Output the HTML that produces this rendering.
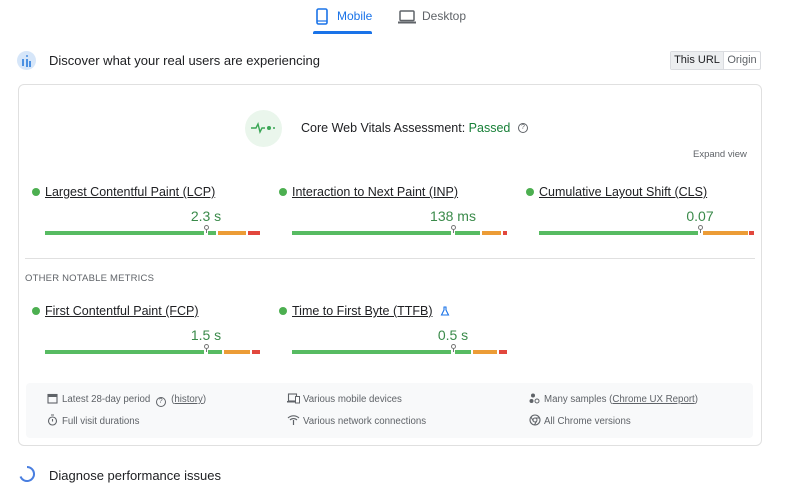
<!DOCTYPE html>
<html><head><meta charset="utf-8"><style>
*{margin:0;padding:0;box-sizing:border-box}
body{width:800px;height:493px;background:#fff;font-family:"Liberation Sans",sans-serif;color:#202124;position:relative;overflow:hidden}
.a{position:absolute;white-space:nowrap}
.lbl{font-size:12.5px;text-decoration:underline;color:#202124}
.dot{width:8px;height:8px;border-radius:50%;background:#4caf50}
.val{font-size:14px;color:#3a8a4a;transform:translateX(-50%)}
.seg{position:absolute;height:4px;top:231px}
.g{background:#57bb62}.o{background:#ec9c36}.r{background:#e2473d}
.mk{position:absolute;width:5px;height:5px;border:1px solid #777;border-radius:50%;background:#fff}
.mkl{position:absolute;width:1px;height:4px;background:#777}
.ft{font-size:9.7px;color:#5f6368}
</style></head><body>
<svg class="a" style="left:316px;top:8px" width="12" height="17" viewBox="0 0 12 17"><rect x="1" y="1" width="10" height="15" rx="1.5" fill="none" stroke="#1a73e8" stroke-width="1.6"/><line x1="1" y1="13" x2="11" y2="13" stroke="#1a73e8" stroke-width="1.2"/></svg>
<div class="a" style="left:337px;top:9px;font-size:12px;color:#1a73e8">Mobile</div>
<div class="a" style="left:313px;top:31px;width:59px;height:3px;background:#1a73e8;border-radius:2px 2px 0 0"></div>
<svg class="a" style="left:398px;top:10px" width="18" height="14" viewBox="0 0 18 14"><rect x="2" y="1" width="14" height="9.5" rx="1" fill="none" stroke="#5f6368" stroke-width="1.5"/><rect x="0" y="11.5" width="18" height="2" fill="#5f6368"/></svg>
<div class="a" style="left:422px;top:9px;font-size:12px;color:#5f6368">Desktop</div>
<div class="a" style="left:17px;top:51px;width:19px;height:19px;border-radius:50%;background:#d6e6f9"></div>
<div class="a" style="left:22px;top:59px;width:2px;height:7px;background:#4a90e2"></div>
<div class="a" style="left:25.5px;top:55px;width:2px;height:2px;background:#4a90e2;border-radius:50%"></div>
<div class="a" style="left:25.5px;top:59px;width:2px;height:8px;background:#4a90e2"></div>
<div class="a" style="left:29px;top:61px;width:2px;height:6px;background:#4a90e2"></div>
<div class="a" style="left:49px;top:53px;font-size:13px">Discover what your real users are experiencing</div>
<div class="a" style="left:670px;top:51px;width:91px;height:19px;border:1px solid #dadce0;border-radius:2px;font-size:11px"></div>
<div class="a" style="left:671px;top:52px;width:53px;height:17px;background:#eceef0;border-right:1px solid #dadce0;font-size:11px;text-align:center;line-height:17px">This URL</div>
<div class="a" style="left:724px;top:52px;width:36px;height:17px;font-size:11px;color:#5f6368;text-align:center;line-height:17px">Origin</div>
<div class="a" style="left:18px;top:84px;width:744px;height:362px;border:1px solid #e0e0e0;border-radius:6px"></div>
<div class="a" style="left:245px;top:110px;width:37px;height:37px;border-radius:50%;background:#eaf6ec"></div>
<svg class="a" style="left:250px;top:121px" width="26" height="14" viewBox="0 0 26 14"><path d="M1 7h5l2-4 2 8 2-4h3" fill="none" stroke="#3aa655" stroke-width="1.4"/><circle cx="19" cy="7" r="2" fill="#3aa655"/><circle cx="24" cy="7" r="1" fill="#3aa655"/></svg>
<div class="a" style="left:301px;top:121px;font-size:12.5px">Core Web Vitals Assessment: <span style="color:#188038">Passed</span></div>
<div class="a" style="left:518px;top:123px;width:10px;height:10px;border:1px solid #5f6368;border-radius:50%;font-size:7px;text-align:center;line-height:8px;color:#5f6368">?</div>
<div class="a" style="left:693px;top:149px;font-size:9.5px;color:#5f6368">Expand view</div>

<div class="a dot" style="left:32px;top:188px"></div><div class="a lbl" style="left:45px;top:185px">Largest Contentful Paint (LCP)</div>
<div class="a dot" style="left:279px;top:188px"></div><div class="a lbl" style="left:292px;top:185px">Interaction to Next Paint (INP)</div>
<div class="a dot" style="left:526px;top:188px"></div><div class="a lbl" style="left:539px;top:185px">Cumulative Layout Shift (CLS)</div>
<div class="a val" style="left:206px;top:208px">2.3 s</div>
<div class="a val" style="left:453px;top:208px">138 ms</div>
<div class="a val" style="left:700px;top:208px">0.07</div>

<div class="seg g" style="left:45px;width:159px"></div><div class="seg g" style="left:208px;width:8px"></div><div class="seg o" style="left:218px;width:28px"></div><div class="seg r" style="left:248px;width:12px"></div>
<div class="mk" style="left:203.5px;top:225px"></div><div class="mkl" style="left:206px;top:229px"></div>
<div class="seg g" style="left:292px;width:159px"></div><div class="seg g" style="left:455px;width:25px"></div><div class="seg o" style="left:482px;width:19px"></div><div class="seg r" style="left:503px;width:4px"></div>
<div class="mk" style="left:450.5px;top:225px"></div><div class="mkl" style="left:453px;top:229px"></div>
<div class="seg g" style="left:539px;width:159px"></div><div class="seg o" style="left:703px;width:45px"></div><div class="seg r" style="left:749px;width:5px"></div>
<div class="mk" style="left:697.5px;top:225px"></div><div class="mkl" style="left:700px;top:229px"></div>

<div class="a" style="left:25px;top:258px;width:730px;height:1px;background:#e0e0e0"></div>
<div class="a" style="left:25px;top:273px;font-size:9.5px;color:#5f6368;letter-spacing:.2px">OTHER NOTABLE METRICS</div>

<div class="a dot" style="left:32px;top:307px"></div><div class="a lbl" style="left:45px;top:304px">First Contentful Paint (FCP)</div>
<div class="a dot" style="left:279px;top:307px"></div><div class="a lbl" style="left:292px;top:304px">Time to First Byte (TTFB)</div>
<svg class="a" style="left:440px;top:306px" width="10" height="10" viewBox="0 0 10 10"><path d="M3.5 1h3M4 1v3L1.5 9h7L6 4V1" fill="none" stroke="#1a73e8" stroke-width="1.1"/></svg>
<div class="a val" style="left:206px;top:327px">1.5 s</div>
<div class="a val" style="left:453px;top:327px">0.5 s</div>
<div style="position:absolute;left:0;top:119px;width:800px;height:10px">
<div class="seg g" style="left:45px;width:159px"></div><div class="seg g" style="left:208px;width:14px"></div><div class="seg o" style="left:224px;width:26px"></div><div class="seg r" style="left:252px;width:8px"></div>
<div class="mk" style="left:203.5px;top:225px"></div><div class="mkl" style="left:206px;top:229px"></div>
<div class="seg g" style="left:292px;width:159px"></div><div class="seg g" style="left:455px;width:16px"></div><div class="seg o" style="left:473px;width:24px"></div><div class="seg r" style="left:499px;width:8px"></div>
<div class="mk" style="left:450.5px;top:225px"></div><div class="mkl" style="left:453px;top:229px"></div>
</div>

<div class="a" style="left:26px;top:383px;width:727px;height:55px;background:#f8f9fa;border-radius:4px"></div>
<svg class="a" style="left:47px;top:393px" width="11" height="11" viewBox="0 0 11 11"><rect x="1" y="1.5" width="9" height="8.5" fill="none" stroke="#5f6368" stroke-width="1.1"/><rect x="1" y="1.5" width="9" height="2.5" fill="#5f6368"/></svg>
<div class="a ft" style="left:62px;top:394px">Latest 28-day period&nbsp;&nbsp;<span style="display:inline-block;width:10px;height:10px;border:1px solid #5f6368;border-radius:50%;font-size:7px;text-align:center;line-height:8px;vertical-align:-1px">?</span>&nbsp;&nbsp;(<u>history</u>)</div>
<svg class="a" style="left:47px;top:414px" width="11" height="12" viewBox="0 0 11 12"><circle cx="5.5" cy="7" r="4" fill="none" stroke="#5f6368" stroke-width="1.1"/><path d="M4 1h3M5.5 5v2.5" stroke="#5f6368" stroke-width="1.1"/></svg>
<div class="a ft" style="left:62px;top:416px">Full visit durations</div>
<svg class="a" style="left:287px;top:393px" width="13" height="11" viewBox="0 0 13 11"><rect x="1.5" y="1" width="8" height="7" fill="none" stroke="#5f6368" stroke-width="1.1"/><rect x="0" y="8" width="9" height="1.5" fill="#5f6368"/><rect x="8.5" y="3.5" width="4" height="6.5" fill="#fff" stroke="#5f6368" stroke-width="1"/></svg>
<div class="a ft" style="left:303px;top:394px">Various mobile devices</div>
<svg class="a" style="left:287px;top:414px" width="13" height="11" viewBox="0 0 13 11"><path d="M1 4a8 8 0 0 1 11 0M3 6a5 5 0 0 1 7 0" fill="none" stroke="#5f6368" stroke-width="1.2"/><path d="M6.5 6v5" stroke="#5f6368" stroke-width="1.2"/></svg>
<div class="a ft" style="left:303px;top:416px">Various network connections</div>
<svg class="a" style="left:529px;top:393px" width="11" height="11" viewBox="0 0 11 11"><circle cx="4" cy="2.5" r="2" fill="#5f6368"/><circle cx="2.5" cy="8" r="2" fill="#5f6368"/><circle cx="8" cy="8" r="2" fill="none" stroke="#5f6368"/></svg>
<div class="a ft" style="left:544px;top:394px">Many samples (<u>Chrome UX Report</u>)</div>
<svg class="a" style="left:529px;top:414px" width="12" height="12" viewBox="0 0 12 12"><circle cx="6" cy="6" r="5" fill="none" stroke="#5f6368" stroke-width="1.1"/><circle cx="6" cy="6" r="2" fill="none" stroke="#5f6368" stroke-width="1"/><path d="M6 4h4.5M4.3 7L2 3M7.7 7l-2.3 4" stroke="#5f6368" stroke-width="1"/></svg>
<div class="a ft" style="left:544px;top:416px">All Chrome versions</div>

<svg class="a" style="left:18px;top:465px" width="18" height="18" viewBox="0 0 18 18"><path d="M9 2a7 7 0 1 1-6.5 9.5" fill="none" stroke="#4a7fe0" stroke-width="2"/></svg>
<div class="a" style="left:49px;top:468px;font-size:13px">Diagnose performance issues</div>
</body></html>
